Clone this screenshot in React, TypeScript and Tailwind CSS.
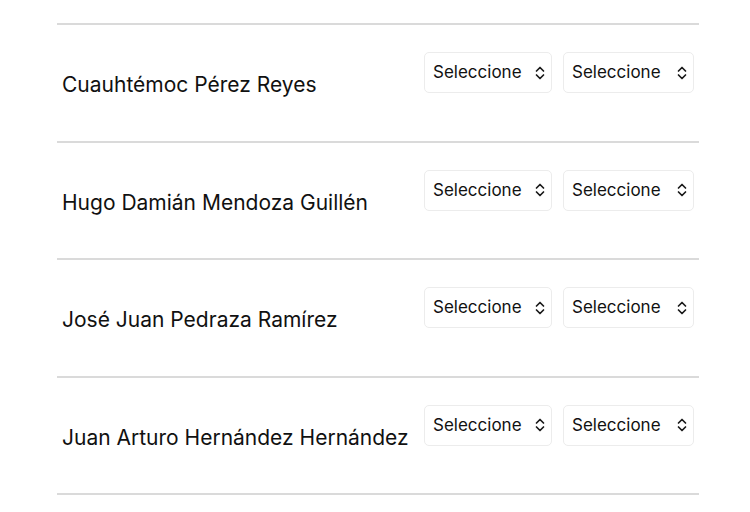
import React from "react";

const names = [
  "Cuauhtémoc Pérez Reyes",
  "Hugo Damián Mendoza Guillén",
  "José Juan Pedraza Ramírez",
  "Juan Arturo Hernández Hernández",
];

function Chevron() {
  return (
    <svg width="10" height="14" viewBox="0 0 10 14" fill="none" stroke="#1a1a1a" strokeWidth="1.7" strokeLinecap="round" strokeLinejoin="round">
      <path d="M1.5 5 L5 1.5 L8.5 5" />
      <path d="M1.5 9 L5 12.5 L8.5 9" />
    </svg>
  );
}

function Select({ w }: { w: string }) {
  return (
    <div className={`${w} h-[41px] flex items-center justify-between pl-[8px] pr-[6px] rounded-[5px] border border-[#ececec] bg-white`}>
      <span className="text-[17px] text-[#111] leading-none">Seleccione</span>
      <Chevron />
    </div>
  );
}

export default function App() {
  return (
    <div className="w-[750px] h-[512px] bg-white overflow-hidden" style={{ fontFamily: "Inter, 'Noto Sans', sans-serif" }}>
      <div className="ml-[57px] w-[642px] pt-[23px]">
        {names.map((n) => (
          <div key={n} className="h-[117.5px] border-t-[2px] border-[#dadada] flex justify-between pl-[5px] pr-[5px]">
            <div className="pt-[44px] text-[21px] text-[#111] leading-[32px]">{n}</div>
            <div className="pt-[27px] flex gap-[11px]">
              <Select w="w-[128px]" />
              <Select w="w-[131px]" />
            </div>
          </div>
        ))}
        <div className="border-t-[2px] border-[#dadada]" />
      </div>
    </div>
  );
}
